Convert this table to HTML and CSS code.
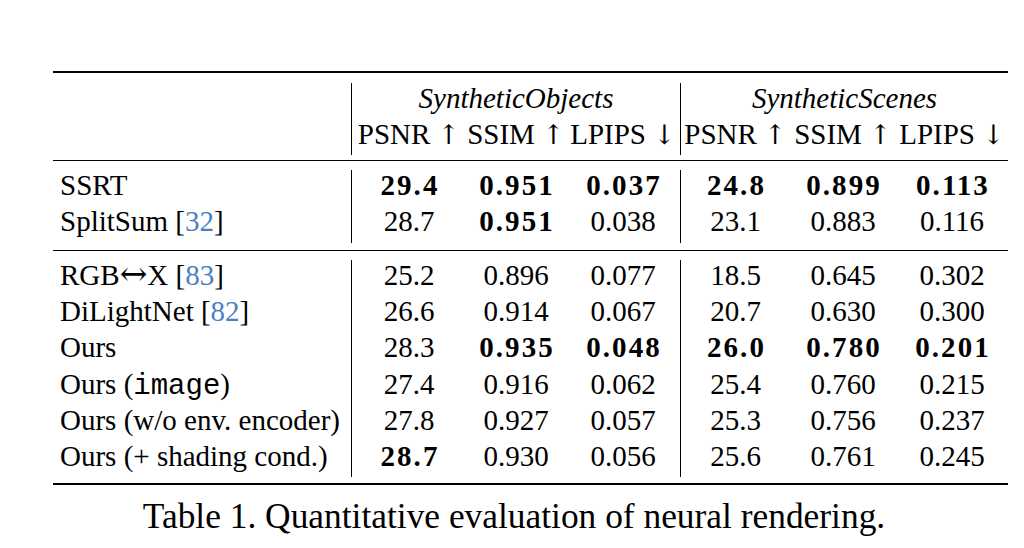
FILE: index.html
```html
<!DOCTYPE html>
<html lang="en">
<head>
<meta charset="utf-8">
<title>Table 1</title>
<link rel="stylesheet" href="styles.css">
</head>
<body>
<div class="page">
  <table class="results">
    <colgroup>
      <col class="c-name">
      <col class="c-g1a"><col class="c-g1b"><col class="c-g1c">
      <col class="c-g2a"><col class="c-g2b"><col class="c-g2c">
    </colgroup>
    <thead>
      <tr class="rule"><td colspan="7"><div class="line thick top"></div></td></tr>
      <tr class="row">
        <td class="name" rowspan="2"></td>
        <td class="grp vl" colspan="3">SyntheticObjects</td>
        <td class="grp vl" colspan="3">SyntheticScenes</td>
      </tr>
      <tr class="row">
        <td class="num vl">PSNR <span class="arr">↑</span></td><td class="num">SSIM <span class="arr">↑</span></td><td class="num">LPIPS <span class="arr">↓</span></td>
        <td class="num vl">PSNR <span class="arr">↑</span></td><td class="num">SSIM <span class="arr">↑</span></td><td class="num">LPIPS <span class="arr">↓</span></td>
      </tr>
      <tr class="rule"><td colspan="7"><div class="line mid1"></div></td></tr>
    </thead>
    <tbody>
      <tr class="row">
        <td class="name">SSRT</td>
        <td class="num vl b">29.4</td><td class="num b">0.951</td><td class="num b">0.037</td>
        <td class="num vl b">24.8</td><td class="num b">0.899</td><td class="num b">0.113</td>
      </tr>
      <tr class="row">
        <td class="name">SplitSum [<span class="ref">32</span>]</td>
        <td class="num vl">28.7</td><td class="num b">0.951</td><td class="num">0.038</td>
        <td class="num vl">23.1</td><td class="num">0.883</td><td class="num">0.116</td>
      </tr>
      <tr class="rule"><td colspan="7"><div class="line mid2"></div></td></tr>
      <tr class="row">
        <td class="name">RGB<span class="lr">↔</span>X [<span class="ref">83</span>]</td>
        <td class="num vl">25.2</td><td class="num">0.896</td><td class="num">0.077</td>
        <td class="num vl">18.5</td><td class="num">0.645</td><td class="num">0.302</td>
      </tr>
      <tr class="row">
        <td class="name">DiLightNet [<span class="ref">82</span>]</td>
        <td class="num vl">26.6</td><td class="num">0.914</td><td class="num">0.067</td>
        <td class="num vl">20.7</td><td class="num">0.630</td><td class="num">0.300</td>
      </tr>
      <tr class="row">
        <td class="name">Ours</td>
        <td class="num vl">28.3</td><td class="num b">0.935</td><td class="num b">0.048</td>
        <td class="num vl b">26.0</td><td class="num b">0.780</td><td class="num b">0.201</td>
      </tr>
      <tr class="row">
        <td class="name">Ours (<span class="tt">image</span>)</td>
        <td class="num vl">27.4</td><td class="num">0.916</td><td class="num">0.062</td>
        <td class="num vl">25.4</td><td class="num">0.760</td><td class="num">0.215</td>
      </tr>
      <tr class="row">
        <td class="name">Ours (w/o env. encoder)</td>
        <td class="num vl">27.8</td><td class="num">0.927</td><td class="num">0.057</td>
        <td class="num vl">25.3</td><td class="num">0.756</td><td class="num">0.237</td>
      </tr>
      <tr class="row">
        <td class="name">Ours (+ shading cond.)</td>
        <td class="num vl b">28.7</td><td class="num">0.930</td><td class="num">0.056</td>
        <td class="num vl">25.6</td><td class="num">0.761</td><td class="num">0.245</td>
      </tr>
      <tr class="rule"><td colspan="7"><div class="line thick bottom"></div></td></tr>
    </tbody>
  </table>
  <div class="caption">Table 1. Quantitative evaluation of neural rendering.</div>
</div>
</body>
</html>
```

FILE: styles.css
```css
html, body {
  margin: 0;
  padding: 0;
  background: #ffffff;
}

body {
  font-family: "Liberation Serif", "Times New Roman", serif;
  color: #000000;
}

.page {
  padding: 71px 0 0 53px;
  width: 955px;
}

.results {
  width: 955px;
  table-layout: fixed;
  border-collapse: separate;
  border-spacing: 0;
  font-family: "Liberation Serif", "Times New Roman", serif;
  font-size: 29px;
}

.c-name { width: 298px; }
.c-g1a { width: 115px; }
.c-g1b { width: 100px; }
.c-g1c { width: 114px; }
.c-g2a { width: 110px; }
.c-g2b { width: 106px; }
.c-g2c { width: 112px; }

.results td {
  padding: 0;
  white-space: nowrap;
  font-family: "Liberation Serif", "Times New Roman", serif;
}

.row td {
  height: 36.3px;
  line-height: 31px;
  vertical-align: top;
}

.rule td {
  padding: 0;
  line-height: 0;
  height: auto;
}

.line {
  background: #000000;
  height: 1px;
}

.line.thick {
  height: 2px;
}

.line.top {
  margin: 0 0 9.5px 0;
}

.line.mid1 {
  margin: 5px 0 9px 0;
}

.line.mid2 {
  margin: 7px 0 9px 0;
}

.line.bottom {
  margin: 6px 0 0 0;
}

.results td.name {
  text-align: left;
  padding-left: 7px;
}

.num {
  text-align: center;
}

.grp {
  text-align: center;
  font-style: italic;
}

.vl {
  border-left: 1px solid #000000;
}

.b {
  font-weight: bold;
  letter-spacing: 0.07em;
  text-indent: 0.07em;
}

.ref {
  color: #4a7fc1;
}

.arr {
  font-family: "DejaVu Serif", serif;
  font-size: 27px;
  line-height: 20px;
}

.lr {
  font-family: "DejaVu Serif", serif;
  font-size: 33px;
  line-height: 20px;
}

.results td .tt {
  font-family: "Liberation Mono", "Courier New", monospace;
  font-size: 29px;
  line-height: 20px;
}

.caption {
  margin-top: 11px;
  padding-right: 33px;
  text-align: center;
  font-size: 35.4px;
  line-height: 40px;
  white-space: nowrap;
}
```
